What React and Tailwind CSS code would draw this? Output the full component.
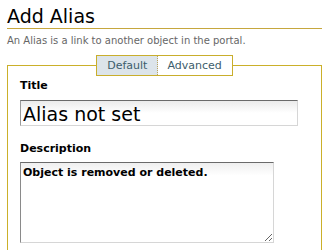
export default function App() {
  return (
    <div className="h-[250px] w-[329px] overflow-hidden bg-white px-[7px] pt-[5px] font-['DejaVu_Sans',sans-serif] text-black">
      <h1 className="border-b border-[#c6a73e] text-[19px] font-normal leading-[23px]">Add Alias</h1>
      <p className="mt-[5px] text-[10px] leading-[14px] text-[#666]">
        An Alias is a link to another object in the portal.
      </p>

      <div className="mt-[17px] bg-[#cbb02a] p-px">
        <div className="bg-white px-[12px] pt-px pb-4">
          <div className="mx-auto -mt-[12px] flex w-fit border border-[#c9ae2c] text-[11px] leading-[19px] text-[#3d5d6c]">
            <span className="border-r border-dotted border-[#b9a35e] bg-[#dce4ea] pl-[10px] pr-[10px]">Default</span>
            <span className="bg-white pl-[9px] pr-[10px]">Advanced</span>
          </div>

          <label className="mt-[3px] block text-[11px] font-bold leading-[14px]">Title</label>
          <input
            type="text"
            defaultValue="Alias not set"
            className="mt-[7px] block h-[26px] w-[278px] border border-[#d6d6d6] border-t-[#6a6a6a] border-l-[#9a9a9a] bg-linear-to-b from-[#ebebeb] to-white to-50% px-[2px] pt-[2px] pb-0 text-[19px] text-black outline-none"
          />

          <label className="mt-[16px] block text-[11px] font-bold leading-[14px]">Description</label>
          <textarea
            defaultValue="Object is removed or deleted."
            className="mt-[6px] block h-[81px] w-[254px] border border-[#d6d6d6] border-t-[#6a6a6a] border-l-[#8a8a8a] bg-linear-to-b from-[#efefef] to-white to-[16%] px-[2px] pt-[3px] text-[11px] font-bold leading-[14px] text-black outline-none"
          />
        </div>
      </div>
    </div>
  )
}
